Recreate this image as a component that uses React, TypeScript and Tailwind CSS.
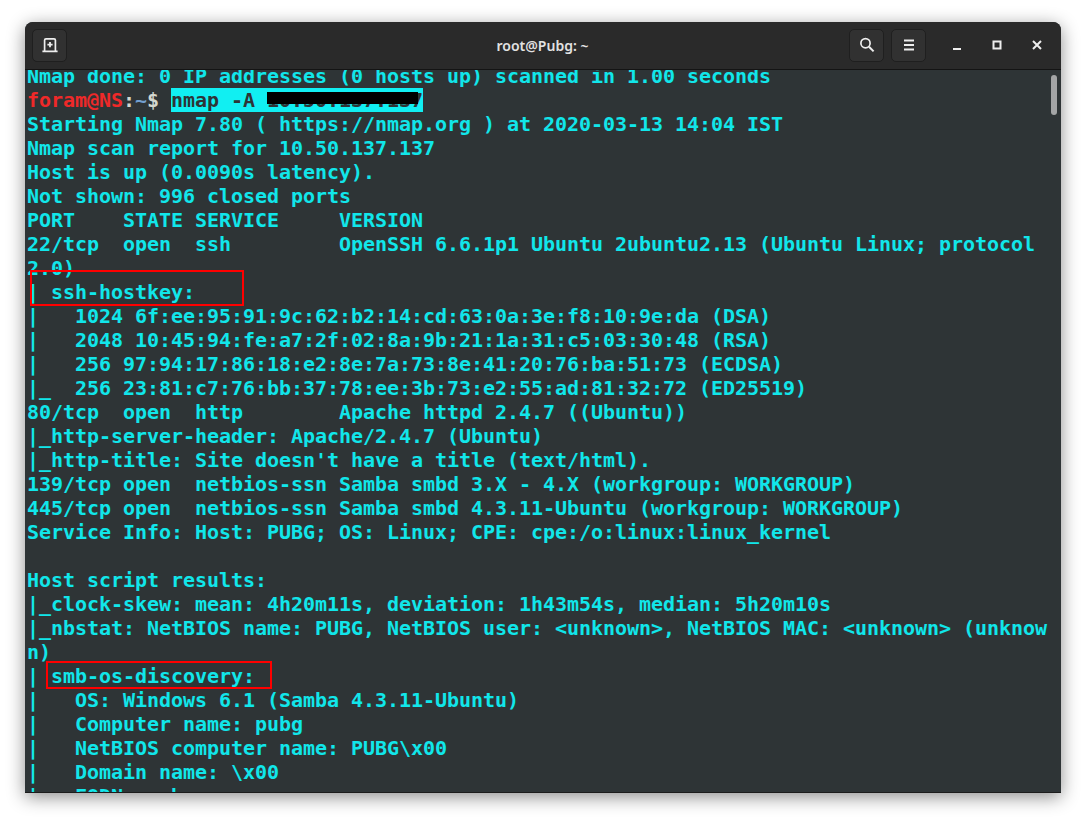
import React from "react";

const linesA = [
  "Starting Nmap 7.80 ( https://nmap.org ) at 2020-03-13 14:04 IST",
  "Nmap scan report for 10.50.137.137",
  "Host is up (0.0090s latency).",
  "Not shown: 996 closed ports",
  "PORT    STATE SERVICE     VERSION",
  "22/tcp  open  ssh         OpenSSH 6.6.1p1 Ubuntu 2ubuntu2.13 (Ubuntu Linux; protocol",
  "2.0)",
  "| ssh-hostkey:",
  "|   1024 6f:ee:95:91:9c:62:b2:14:cd:63:0a:3e:f8:10:9e:da (DSA)",
  "|   2048 10:45:94:fe:a7:2f:02:8a:9b:21:1a:31:c5:03:30:48 (RSA)",
  "|   256 97:94:17:86:18:e2:8e:7a:73:8e:41:20:76:ba:51:73 (ECDSA)",
  "|_  256 23:81:c7:76:bb:37:78:ee:3b:73:e2:55:ad:81:32:72 (ED25519)",
  "80/tcp  open  http        Apache httpd 2.4.7 ((Ubuntu))",
  "|_http-server-header: Apache/2.4.7 (Ubuntu)",
  "|_http-title: Site doesn't have a title (text/html).",
  "139/tcp open  netbios-ssn Samba smbd 3.X - 4.X (workgroup: WORKGROUP)",
  "445/tcp open  netbios-ssn Samba smbd 4.3.11-Ubuntu (workgroup: WORKGROUP)",
  "Service Info: Host: PUBG; OS: Linux; CPE: cpe:/o:linux:linux_kernel",
  " ",
  "Host script results:",
  "|_clock-skew: mean: 4h20m11s, deviation: 1h43m54s, median: 5h20m10s",
  "|_nbstat: NetBIOS name: PUBG, NetBIOS user: <unknown>, NetBIOS MAC: <unknown> (unknow",
  "n)",
  "| smb-os-discovery:",
  "|   OS: Windows 6.1 (Samba 4.3.11-Ubuntu)",
  "|   Computer name: pubg",
  "|   NetBIOS computer name: PUBG\\x00",
  "|   Domain name: \\x00",
  "|   FQDN: pubg",
];

function HeaderButton({ children }: { children: React.ReactNode }) {
  return (
    <div className="w-[35px] h-[33px] rounded-[5px] border border-[#1f1f1f] bg-[#313131] flex items-center justify-center">
      {children}
    </div>
  );
}

export default function App() {
  return (
    <div className="w-[1086px] h-[821px] bg-white overflow-hidden pt-[22px] pl-[25px]">
      <div className="relative w-[1036px] h-[771px] rounded-t-[8px] overflow-hidden flex flex-col shadow-[0_4px_18px_rgba(0,0,0,0.45)] bg-[#2e3436] border-b border-[#1c1c1c]">
        <div className="h-[48px] shrink-0 bg-[#2a2a2a] border-b border-[#141414] flex items-center pl-[7px] pr-[16px] pb-[1px] font-['Noto_Sans','Liberation_Sans',sans-serif]">
          <HeaderButton>
            <svg width="16" height="16" viewBox="0 0 16 16" fill="none">
              <path d="M2.6 14V3.2a1.4 1.4 0 0 1 1.4-1.4h8a1.4 1.4 0 0 1 1.4 1.4V14" stroke="#eeeeee" strokeWidth="1.7" />
              <path d="M0.4 14.3h15.2" stroke="#eeeeee" strokeWidth="1.7" />
              <path d="M8 5v5.2M5.4 7.6h5.2" stroke="#eeeeee" strokeWidth="1.8" />
            </svg>
          </HeaderButton>
          <div className="flex-1 text-center text-[#e2e2e2] text-[14px] font-semibold pl-[169px]">root@Pubg: ~</div>
          <div className="flex items-center gap-[7px]">
            <HeaderButton>
              <svg width="16" height="16" viewBox="0 0 16 16" fill="none">
                <circle cx="6.5" cy="6.2" r="4.6" stroke="#eeeeee" strokeWidth="1.7" />
                <path d="M10 9.8l4.6 4.6" stroke="#eeeeee" strokeWidth="2" />
              </svg>
            </HeaderButton>
            <HeaderButton>
              <svg width="12" height="12" viewBox="0 0 12 12" fill="none">
                <path d="M1 1.5h10M1 6h10M1 10.5h10" stroke="#eeeeee" strokeWidth="2" />
              </svg>
            </HeaderButton>
          </div>
          <div className="flex items-center ml-[23px] gap-[24px]">
            <div className="w-[16px] h-[16px] flex items-center justify-center">
              <svg width="16" height="16" viewBox="0 0 16 16" fill="none">
                <path d="M4 12h8" stroke="#eeeeee" strokeWidth="2" />
              </svg>
            </div>
            <div className="w-[16px] h-[16px] flex items-center justify-center">
              <svg width="16" height="16" viewBox="0 0 16 16" fill="none">
                <rect x="4.5" y="4.5" width="7" height="7" stroke="#eeeeee" strokeWidth="2" />
              </svg>
            </div>
            <div className="w-[16px] h-[16px] flex items-center justify-center">
              <svg width="16" height="16" viewBox="0 0 16 16" fill="none">
                <path d="M4 4l8 8M12 4l-8 8" stroke="#eeeeee" strokeWidth="2" />
              </svg>
            </div>
          </div>
        </div>

        <div className="relative flex-1 overflow-hidden bg-[#2e3436] pl-[2px]">
          <div className="-mt-[6px] font-['DejaVu_Sans_Mono',monospace] font-bold text-[20px] leading-[24px] tracking-[-0.04px] text-[#11e6ea] whitespace-pre">
            <div className="h-[24px]">Nmap done: 0 IP addresses (0 hosts up) scanned in 1.00 seconds</div>
            <div className="h-[24px] flex">
              <span className="text-[#ef2929]">foram@NS</span>
              <span className="text-[#d3d7cf]">:</span>
              <span className="text-[#729fcf]">~</span>
              <span className="text-[#d3d7cf]">$ </span>
              <span className="bg-[#11eff2] text-[#2e3436]">nmap -A 10.50.137.137</span>
            </div>
            {linesA.map((l, i) => (
              <div key={i} className="h-[24px]">{l}</div>
            ))}
          </div>
          <div className="absolute left-[242px] top-[22px] w-[151px] h-[12px] bg-black" />
          <div className="absolute left-[5px] top-[200px] w-[214px] h-[36px] border-2 border-[#ff0000]" />
          <div className="absolute left-[21px] top-[591px] w-[226px] h-[28px] border-2 border-[#ff0000]" />
          <div className="absolute left-[1026px] top-[5px] w-[6px] h-[40px] rounded-[3px] bg-[#a3a5a6]" />
        </div>
      </div>
    </div>
  );
}
